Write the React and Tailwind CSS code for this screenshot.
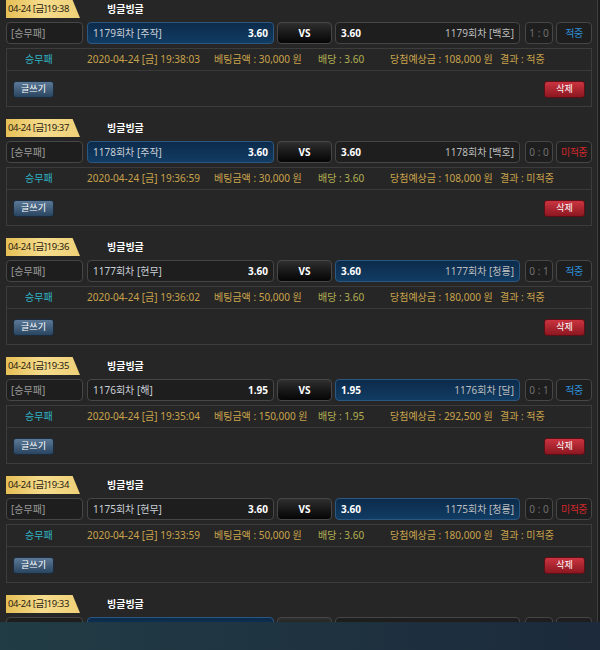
import React from 'react';

const bets = [
    { time: '19:38', round: 1179, home: '주작', away: '백호', odds: '3.60', pick: 'home', score: '1 : 0', win: true, placed: '19:38:03', amount: '30,000', payout: '108,000' },
    { time: '19:37', round: 1178, home: '주작', away: '백호', odds: '3.60', pick: 'home', score: '0 : 0', win: false, placed: '19:36:59', amount: '30,000', payout: '108,000' },
    { time: '19:36', round: 1177, home: '현무', away: '청룡', odds: '3.60', pick: 'away', score: '0 : 1', win: true, placed: '19:36:02', amount: '50,000', payout: '180,000' },
    { time: '19:35', round: 1176, home: '해', away: '달', odds: '1.95', pick: 'away', score: '0 : 1', win: true, placed: '19:35:04', amount: '150,000', payout: '292,500' },
    { time: '19:34', round: 1175, home: '현무', away: '청룡', odds: '3.60', pick: 'away', score: '0 : 0', win: false, placed: '19:33:59', amount: '50,000', payout: '180,000' },
    { time: '19:33', round: 1174, home: '주작', away: '백호', odds: '3.60', pick: 'home', score: '0 : 0', win: false, placed: '19:32:58', amount: '30,000', payout: '108,000', partial: true },
];

const boxBase = 'h-[22px] rounded-[4px] border flex items-center';
const plain = 'border-[#464646] bg-[#1e1e1e]';
const picked = 'border-[#2c5780] bg-gradient-to-b from-[#0c2b4b] to-[#113c63]';

const BetCard = ({ bet }) => {
    const resultText = bet.win ? '적중' : '미적중';
    return (
        <div className="flex flex-col">
            {/* header */}
            <div className="flex items-center h-[18px]">
                <div className="w-[74px] h-[18px] flex items-center pl-[2px] text-[9.5px] tracking-[-0.4px] text-[#2a2212] bg-gradient-to-r from-[#e6bf55] via-[#f5dc8c] to-[#efd078] [clip-path:polygon(0_0,90%_0,100%_100%,0_100%)]">
                    04-24 [금]{bet.time}
                </div>
                <div className="ml-[27px] text-[10px] font-bold text-white">빙글빙글</div>
            </div>

            {/* match row */}
            <div className="flex items-center mt-[4px] text-[10px]">
                <div className={`${boxBase} ${plain} w-[77px] px-[4px] text-[#9a9a9a]`}>[승무패]</div>
                <div className={`${boxBase} ${bet.pick === 'home' ? picked : plain} w-[187px] ml-[4px] px-[5px] justify-between`}>
                    <span className="text-[#c9cfd6]">{bet.round}회차 [{bet.home}]</span>
                    <span className="text-white font-bold">{bet.odds}</span>
                </div>
                <div className={`${boxBase} w-[55px] ml-[3px] justify-center border-[#474747] bg-gradient-to-b from-[#2f2f2f] to-[#060606] text-white font-bold`}>VS</div>
                <div className={`${boxBase} ${bet.pick === 'away' ? picked : plain} w-[185px] ml-[3px] px-[5px] justify-between`}>
                    <span className="text-white font-bold">{bet.odds}</span>
                    <span className="text-[#bdbdbd]">{bet.round}회차 [{bet.away}]</span>
                </div>
                <div className={`${boxBase} ${plain} w-[28px] ml-[5px] justify-center text-[#707070]`}>{bet.score}</div>
                <div className={`${boxBase} ${plain} w-[36px] ml-[3px] justify-center tracking-[-0.5px] ${bet.win ? 'text-[#2e8fd8]' : 'text-[#d2282c]'}`}>{resultText}</div>
            </div>

            {/* info panel */}
            {!bet.partial && (
                <div className="mt-[4px] h-[59px] border border-[#3c3c3c] flex flex-col">
                    <div className="h-[22px] flex items-center text-[10px] border-b border-[#3a3a3a]">
                        <div className="w-[80px] pl-[18px] text-[#2fb4c4]">승무패</div>
                        <div className="w-[127px] text-[#c9a34c]">2020-04-24 [금] {bet.placed}</div>
                        <div className="w-[104px] text-[#c9a34c]">베팅금액 : {bet.amount} 원</div>
                        <div className="w-[72px] text-[#b3b052]">배당 : {bet.odds}</div>
                        <div className="w-[110px] text-[#c9a34c]">당첨예상금 : {bet.payout} 원</div>
                        <div className="text-[#c9a34c]">결과 : {resultText}</div>
                    </div>
                    <div className="flex-1 flex items-center justify-between px-[6px] pt-[1px]">
                        <button className="w-[41px] h-[17px] rounded-[3px] border border-[#1b2b3b] bg-gradient-to-b from-[#5b7997] to-[#2a4560] text-[9px] text-white flex items-center justify-center">글쓰기</button>
                        <button className="w-[41px] h-[17px] rounded-[3px] border border-[#5a1016] bg-gradient-to-b from-[#cb3440] to-[#8c1720] text-[9px] text-white flex items-center justify-center">삭제</button>
                    </div>
                </div>
            )}
        </div>
    );
};

export default function App() {
    return (
        <div className="h-[650px] overflow-hidden bg-[#262626] flex" style={{ fontFamily: '"Noto Sans", "Noto Sans CJK KR", sans-serif' }}>
            <div className="flex-1 flex flex-col gap-[12px] pl-[6px] pr-[5px]">
                {bets.map((bet) => (
                    <BetCard key={bet.round} bet={bet} />
                ))}
            </div>
            <div className="w-[3px] border-l border-[#3e3e3e] bg-[#1c1c1c]" />

            {/* bottom overlay */}
            <div className="fixed left-0 right-0 bottom-0 h-[28px] bg-gradient-to-r from-[#213c45] to-[#1c2a3b]" />
        </div>
    );
}
